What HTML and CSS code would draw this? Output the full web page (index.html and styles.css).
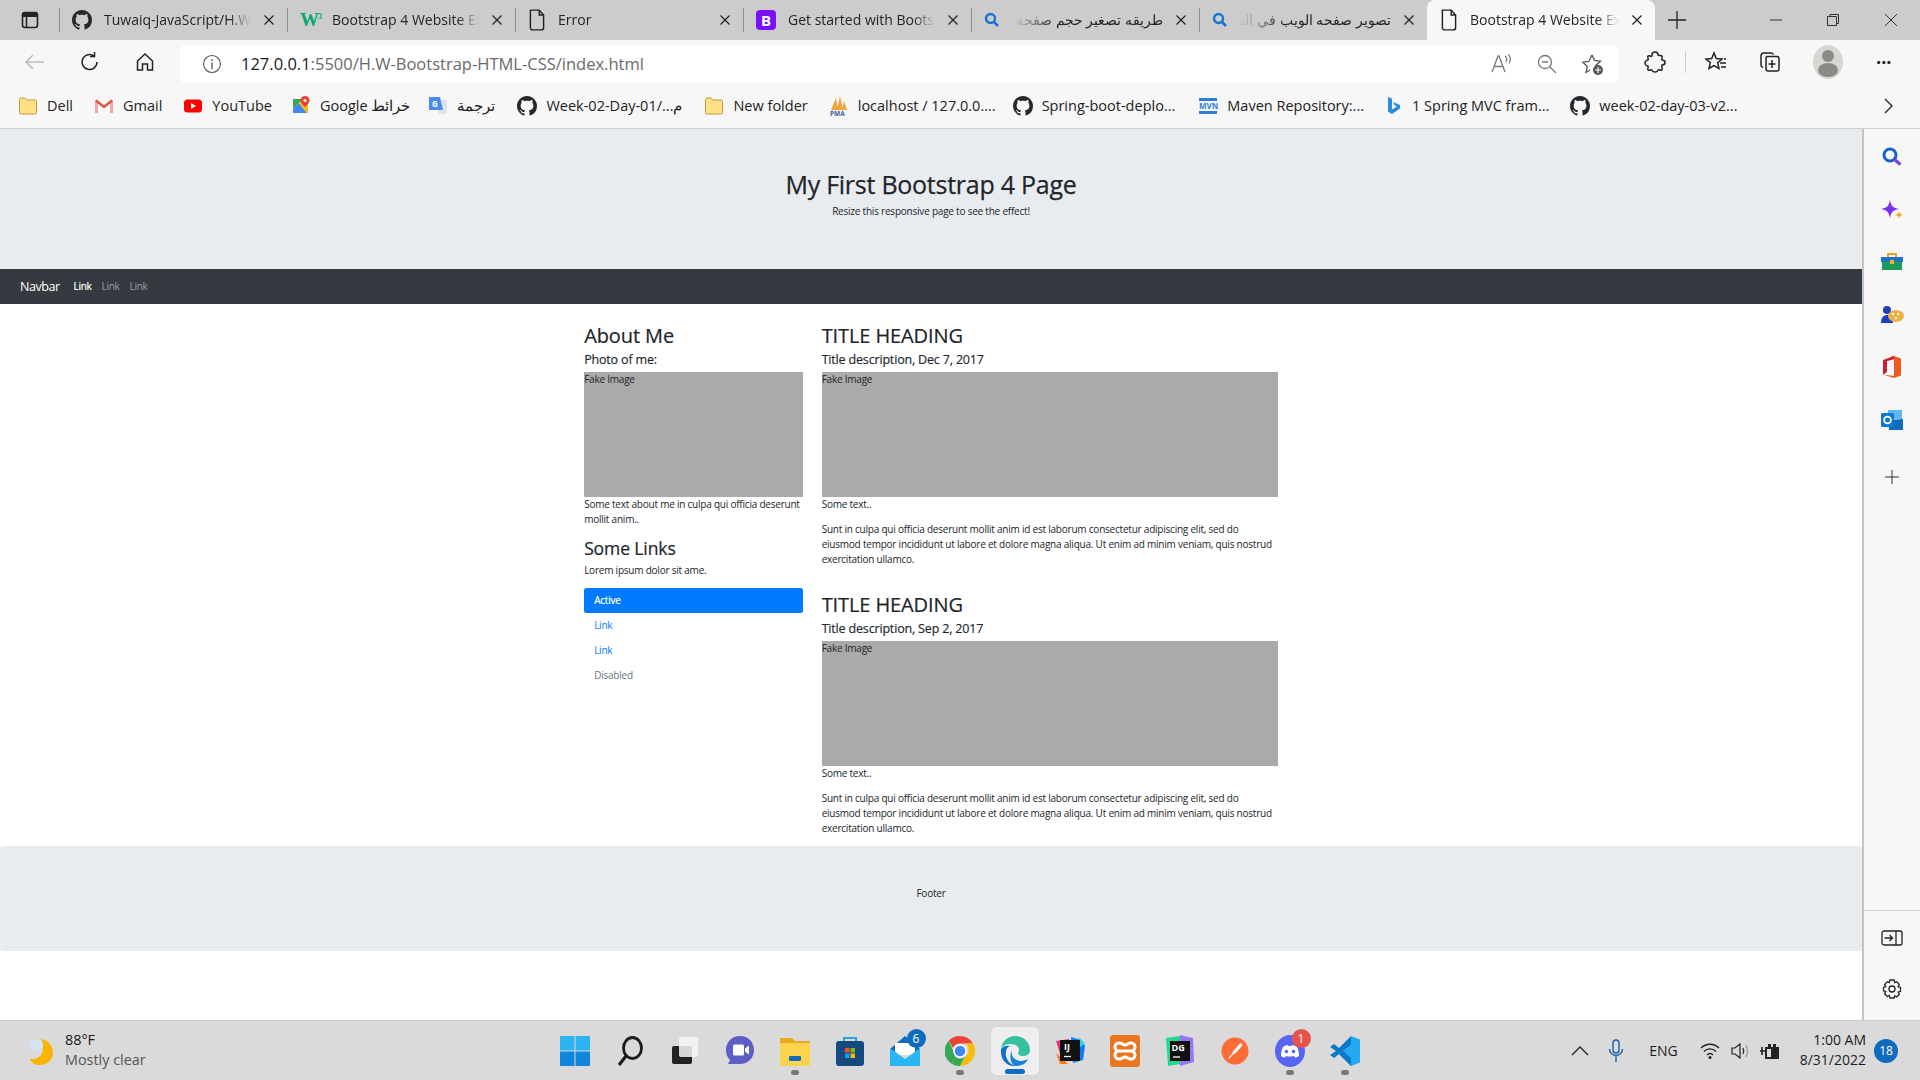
FILE: index.html
```html
<!DOCTYPE html>
<html lang="en">
<head>
    <meta charset="UTF-8">
    <meta name="viewport" content="width=device-width, initial-scale=1.0">
    <title>Bootstrap 4 Website Example</title>
    <link rel="stylesheet" href="styles.css">
</head>
<body>
    <svg class="defs" width="0" height="0">
        <symbol id="i-github" viewBox="0 0 16 16"><path fill="#24292e" d="M8 0C3.58 0 0 3.58 0 8c0 3.54 2.29 6.53 5.47 7.59.4.07.55-.17.55-.38 0-.19-.01-.82-.01-1.49-2.01.37-2.53-.49-2.69-.94-.09-.23-.48-.94-.82-1.13-.28-.15-.68-.52-.01-.53.63-.01 1.08.58 1.23.82.72 1.21 1.87.87 2.33.66.07-.52.28-.87.51-1.07-1.78-.2-3.64-.89-3.64-3.95 0-.87.31-1.59.82-2.15-.08-.2-.36-1.02.08-2.12 0 0 .67-.21 2.2.82.64-.18 1.32-.27 2-.27.68 0 1.36.09 2 .27 1.53-1.04 2.2-.82 2.2-.82.44 1.1.16 1.92.08 2.12.51.56.82 1.27.82 2.15 0 3.07-1.87 3.75-3.65 3.95.29.25.54.73.54 1.48 0 1.07-.01 1.93-.01 2.2 0 .21.15.46.55.38A8.013 8.013 0 0016 8c0-4.42-3.58-8-8-8z"/></symbol>
        <symbol id="i-page" viewBox="0 0 16 20"><path fill="none" stroke="#222" stroke-width="1.3" d="M2 1h8l4 4.500V17a2 2 0 0 1-2 2H4a2 2 0 0 1-2-2z M10 1v4.500h4"/></symbol>
        <symbol id="i-x" viewBox="0 0 12 12"><path stroke="#222" stroke-width="1.2" d="M1.500 1.500l9 9M10.500 1.500l-9 9"/></symbol>
        <symbol id="i-find" viewBox="0 0 16 16"><circle cx="6.500" cy="6.500" r="4.500" fill="none" stroke="#1a73d0" stroke-width="2.400"/><path stroke="#1a73d0" stroke-width="2.600" d="M10 10l4 4"/></symbol>
        <symbol id="i-folder" viewBox="0 0 20 20"><path fill="#ffe085" stroke="#c09a3c" d="M1.500 3.500a1.500 1.500 0 0 1 1.500-1.500h4l2 2h8a1.500 1.500 0 0 1 1.500 1.500v11a1.500 1.500 0 0 1-1.500 1.500H3a1.500 1.500 0 0 1-1.500-1.500z"/></symbol>
    </svg>

    <div class="window">
        <!-- tabs -->
        <div class="tabstrip">
            <div class="tab-menu">
                <svg width="20" height="20" viewBox="0 0 20 20"><rect x="2.500" y="2.500" width="15" height="15" rx="2.500" fill="none" stroke="#222" stroke-width="1.600"/><path fill="#222" d="M3 3h14v4H3z"/><path stroke="#222" stroke-width="1.600" d="M6.500 7v10"/></svg>
            </div>
            <div class="tab">
                <svg class="tab-icon" width="20" height="20"><use href="#i-github"/></svg>
                <span class="tab-title">Tuwaiq-JavaScript/H.W-Bootstrap</span>
                <svg class="tab-close" width="12" height="12"><use href="#i-x"/></svg>
            </div>
            <div class="tab">
                <span class="tab-icon w3-logo">W<sup>3</sup></span>
                <span class="tab-title">Bootstrap 4 Website Example</span>
                <svg class="tab-close" width="12" height="12"><use href="#i-x"/></svg>
            </div>
            <div class="tab">
                <svg class="tab-icon" width="18" height="22"><use href="#i-page"/></svg>
                <span class="tab-title">Error</span>
                <svg class="tab-close" width="12" height="12"><use href="#i-x"/></svg>
            </div>
            <div class="tab">
                <span class="tab-icon bs-logo">B</span>
                <span class="tab-title">Get started with Bootstrap</span>
                <svg class="tab-close" width="12" height="12"><use href="#i-x"/></svg>
            </div>
            <div class="tab">
                <svg class="tab-icon" width="16" height="16"><use href="#i-find"/></svg>
                <span class="tab-title tab-title-rtl" dir="rtl">طريقه تصغير حجم صفحة الويب</span>
                <svg class="tab-close" width="12" height="12"><use href="#i-x"/></svg>
            </div>
            <div class="tab">
                <svg class="tab-icon" width="16" height="16"><use href="#i-find"/></svg>
                <span class="tab-title tab-title-rtl" dir="rtl">تصوير صفحه الويب في المتصفح</span>
                <svg class="tab-close" width="12" height="12"><use href="#i-x"/></svg>
            </div>
            <div class="tab tab-active">
                <svg class="tab-icon" width="18" height="22"><use href="#i-page"/></svg>
                <span class="tab-title">Bootstrap 4 Website Example</span>
                <svg class="tab-close" width="12" height="12"><use href="#i-x"/></svg>
            </div>
            <svg class="tab-new" width="20" height="20" viewBox="0 0 20 20"><path stroke="#222" stroke-width="1.300" d="M10 1v18M1 10h18"/></svg>
            <div class="win-controls">
                <svg width="12" height="12" viewBox="0 0 12 12"><path stroke="#333" d="M0 6h12"/></svg>
                <svg width="14" height="14" viewBox="0 0 14 14"><path fill="none" stroke="#333" d="M1.500 3.500h9v9h-9zM4 3.500V1.500h8.500v9h-2"/></svg>
                <svg width="14" height="14" viewBox="0 0 14 14"><path stroke="#333" d="M1 1l12 12M13 1L1 13"/></svg>
            </div>
        </div>

        <!-- address bar -->
        <div class="toolbar">
            <svg class="tool tool-back" width="24" height="24" viewBox="0 0 24 24"><path fill="none" stroke="#bbb" stroke-width="1.500" d="M21 12H3M10 5l-7 7 7 7"/></svg>
            <svg class="tool" width="24" height="24" viewBox="0 0 24 24"><path fill="none" stroke="#222" stroke-width="1.500" d="M19 12a7.500 7.500 0 1 1-3-6M16.500 2v4.500H12"/></svg>
            <svg class="tool" width="24" height="24" viewBox="0 0 24 24"><path fill="none" stroke="#222" stroke-width="1.500" d="M4.500 11L12 4l7.500 7v9h-5v-6h-5v6h-5z"/></svg>
            <div class="address">
                <svg width="20" height="20" viewBox="0 0 20 20"><circle cx="10" cy="10" r="8.500" fill="none" stroke="#555" stroke-width="1.100"/><path stroke="#555" stroke-width="1.300" d="M10 8.500V15M10 5v2"/></svg>
                <span class="url"><b>127.0.0.1</b>:5500/H.W-Bootstrap-HTML-CSS/index.html</span>
                <div class="address-tools">
                    <svg width="24" height="24" viewBox="0 0 24 24"><path fill="none" stroke="#777" stroke-width="1.300" d="M3 20L9 4h1l6 16M5.500 14.500h8M16 4c2 1 2 4 1 6M19 2.500c3 2 3 6 1 9"/></svg>
                    <svg width="22" height="22" viewBox="0 0 22 22"><circle cx="9" cy="9" r="6.500" fill="none" stroke="#777" stroke-width="1.300"/><path stroke="#777" stroke-width="1.300" d="M14 14l6 6M6 9h6"/></svg>
                    <svg width="24" height="24" viewBox="0 0 24 24"><path fill="none" stroke="#555" stroke-width="1.300" d="M11 3l2.500 5.500 6 .7-4.500 4 .5 2.500M9 18l-4 2.500 1.300-6-4.500-4.300 6-.7L11 3"/><circle cx="17" cy="18" r="5" fill="#555"/><path stroke="#fff" stroke-width="1.200" d="M17 15v6M14 18h6"/></svg>
                </div>
            </div>
            <div class="tool-right">
                <svg class="t-ext" width="24" height="24" viewBox="0 0 24 24"><path fill="none" stroke="#222" stroke-width="1.500" d="M9 5a3 3 0 0 1 6 0c0 1 3 0 4 1s-1 3 0 4c2 0 3 1 3 2.500s-1 2.500-3 2.500c-1 1 1 4 0 5s-3-1-4 0c0 1-1.500 2-3 2s-3-1-3-2c-1-1-3 1-4 0s1-3 0-4c-1 0-3-1-3-3s2-3 3-3c1-1-1-3 0-4s3 1 4 0z"/></svg>
                <span class="tool-sep"></span>
                <svg class="t-fav" width="24" height="24" viewBox="0 0 24 24"><path fill="none" stroke="#222" stroke-width="1.500" d="M10 3l2.300 5.500 5.700.5-4.300 3.800 1.300 5.700-5-3-5 3 1.300-5.700L2 9l5.700-.5zM16 13h6M17 17h5M20 9h2"/></svg>
                <svg class="t-col" width="24" height="24" viewBox="0 0 24 24"><path fill="none" stroke="#222" stroke-width="1.500" d="M9 6.500h10a2 2 0 0 1 2 2V19a2 2 0 0 1-2 2H10a2 2 0 0 1-2-2V8.500a2 2 0 0 1 1-2zM14 10v8M10.500 14h7M5 17.500c-1-.3-2-1.200-2-2.500V6a3 3 0 0 1 3-3h7c1 0 2 .6 2.500 1.500"/></svg>
                <div class="avatar">
                    <svg width="30" height="32" viewBox="0 0 30 32"><circle cx="15" cy="11" r="6" fill="#8a8a86"/><ellipse cx="15" cy="25" rx="10" ry="7" fill="#8a8a86"/></svg>
                </div>
                <span class="t-more">···</span>
            </div>
        </div>

        <!-- favorites -->
        <div class="bookmarks">
            <div class="bm b-dell"><svg width="20" height="20"><use href="#i-folder"/></svg><span>Dell</span></div>
            <div class="bm b-gmail">
                <svg width="20" height="20" viewBox="0 0 20 20"><path fill="#f0a9a3" d="M1 4h3v13H1zM16 4h3v13h-3z"/><path fill="none" stroke="#d9534a" stroke-width="2.400" d="M2 4.500l8 6.500 8-6.500"/></svg>
                <span>Gmail</span>
            </div>
            <div class="bm b-yt">
                <svg width="20" height="20" viewBox="0 0 20 20"><rect x="1" y="3.500" width="18" height="13" rx="3.500" fill="#f00"/><path fill="#fff" d="M8 7l5 3-5 3z"/></svg>
                <span>YouTube</span>
            </div>
            <div class="bm b-maps">
                <svg width="20" height="20" viewBox="0 0 20 20"><path fill="#34a853" d="M2 3h10l-10 10z"/><path fill="#4285f4" d="M2 13l6-6 8 10H2z"/><path fill="#fbbc04" d="M8 7l3-3 6 6v7h-1z"/><path fill="#ea4335" d="M14 0a4.500 4.500 0 0 1 4.500 4.500C18.500 7.500 14 11 14 11S9.500 7.500 9.500 4.500A4.500 4.500 0 0 1 14 0z"/><circle cx="14" cy="4.500" r="1.500" fill="#fff"/></svg>
                <span>Google خرائط</span>
            </div>
            <div class="bm b-trans">
                <svg width="20" height="20" viewBox="0 0 20 20"><path fill="#dfe3e8" d="M8 4h11v14H11z"/><path fill="#4a8af4" d="M1 1h11l3 13H1z"/><text x="4" y="11" class="g-letter">G</text></svg>
                <span dir="rtl">ترجمة</span>
            </div>
            <div class="bm b-week"><svg width="20" height="20"><use href="#i-github"/></svg><span>Week-02-Day-01/...م</span></div>
            <div class="bm b-new"><svg width="20" height="20"><use href="#i-folder"/></svg><span>New folder</span></div>
            <div class="bm b-pma">
                <svg width="20" height="22" viewBox="0 0 20 22"><path fill="#f2a33a" d="M2 15L7 3l2 12zM8 15l3-14 3 14zM13 15l2-9 3 9z"/><text x="1" y="21" class="pma-text">PMA</text></svg>
                <span>localhost / 127.0.0....</span>
            </div>
            <div class="bm b-spring"><svg width="20" height="20"><use href="#i-github"/></svg><span>Spring-boot-deplo...</span></div>
            <div class="bm b-mvn">
                <svg width="20" height="20" viewBox="0 0 20 20"><path fill="#2f7fd6" d="M1 2h18v3H1zM1 15h18v3H1z"/><text x="1" y="13" class="mvn-text">MVN</text></svg>
                <span>Maven Repository:...</span>
            </div>
            <div class="bm b-mvc">
                <svg width="20" height="20" viewBox="0 0 20 20"><path fill="#2a8be0" d="M5 1l4 1.500v11l5-3-2.500-1.200L10 6l7 3v3.500L9 18l-4-2.500z"/></svg>
                <span>1 Spring MVC fram...</span>
            </div>
            <div class="bm b-week2"><svg width="20" height="20"><use href="#i-github"/></svg><span>week-02-day-03-v2...</span></div>
            <svg class="bm-more" width="12" height="16" viewBox="0 0 12 16"><path fill="none" stroke="#222" stroke-width="1.300" d="M3 1l7 7-7 7"/></svg>
        </div>

        <div class="browser-body">
            <!-- the bootstrap page itself -->
            <div class="page">
                <div class="jumbotron">
                    <h1>My First Bootstrap 4 Page</h1>
                    <p>Resize this responsive page to see the effect!</p>
                </div>
                <nav class="navbar">
                    <a class="navbar-brand">Navbar</a>
                    <a class="nav-item nav-on">Link</a>
                    <a class="nav-item">Link</a>
                    <a class="nav-item">Link</a>
                </nav>
                <div class="content">
                    <div class="col-side">
                        <h2>About Me</h2>
                        <h5>Photo of me:</h5>
                        <div class="fake-img">Fake Image</div>
                        <p>Some text about me in culpa qui officia deserunt mollit anim..</p>
                        <h3>Some Links</h3>
                        <p>Lorem ipsum dolor sit ame.</p>
                        <ul class="pills">
                            <li class="pill pill-active">Active</li>
                            <li class="pill">Link</li>
                            <li class="pill">Link</li>
                            <li class="pill pill-off">Disabled</li>
                        </ul>
                    </div>
                    <div class="col-main">
                        <h2>TITLE HEADING</h2>
                        <h5>Title description, Dec 7, 2017</h5>
                        <div class="fake-img">Fake Image</div>
                        <p>Some text..</p>
                        <p>Sunt in culpa qui officia deserunt mollit anim id est laborum consectetur adipiscing elit, sed do eiusmod tempor incididunt ut labore et dolore magna aliqua. Ut enim ad minim veniam, quis nostrud exercitation ullamco.</p>
                        <br>
                        <h2>TITLE HEADING</h2>
                        <h5>Title description, Sep 2, 2017</h5>
                        <div class="fake-img">Fake Image</div>
                        <p>Some text..</p>
                        <p>Sunt in culpa qui officia deserunt mollit anim id est laborum consectetur adipiscing elit, sed do eiusmod tempor incididunt ut labore et dolore magna aliqua. Ut enim ad minim veniam, quis nostrud exercitation ullamco.</p>
                    </div>
                </div>
                <div class="footer"><p>Footer</p></div>
            </div>

            <!-- edge sidebar -->
            <div class="sidebar">
                <div class="side-top">
                    <svg width="22" height="22" viewBox="0 0 22 22"><circle cx="9" cy="9" r="6" fill="none" stroke="#1b5fc9" stroke-width="3"/><path stroke="#7a3fe0" stroke-width="3.200" d="M13.500 13.500l6 5"/></svg>
                    <svg width="24" height="24" viewBox="0 0 24 24"><path fill="#7a2ff0" d="M10 2c1 6 3 8 9 9-6 1-8 3-9 9-1-6-3-8-9-9 6-1 8-3 9-9z"/><path fill="#f5a623" d="M19 13c.4 2.400 1.200 3.200 4 4-2.800.6-3.600 1.400-4 4-.4-2.600-1.200-3.400-4-4 2.800-.8 3.600-1.600 4-4z"/></svg>
                    <svg width="24" height="20" viewBox="0 0 24 20"><path fill="none" stroke="#f0a020" stroke-width="2" d="M8 5V2h8v3"/><path fill="#1f72c4" d="M1 5h22v5H1z"/><path fill="#1c9a5c" d="M2 10h20v8H2z"/><path fill="#f5b52c" d="M10 8h4v4h-4z"/></svg>
                    <svg width="24" height="22" viewBox="0 0 24 22"><circle cx="7" cy="6" r="4" fill="#1b3fc0"/><path fill="#1b3fc0" d="M1 19c0-6 3-8 6-8s6 2 6 8z"/><ellipse cx="16" cy="12" rx="8" ry="6" fill="#f0b040"/><g fill="#fff"><circle cx="13" cy="10" r="1.200"/><circle cx="18" cy="10" r="1.200"/><circle cx="16" cy="14" r="1.200"/></g></svg>
                    <svg width="22" height="24" viewBox="0 0 22 24"><path fill="#eb5a1e" d="M13 1l7 2.500v17L13 23 2 19.500 13 21V4L6 6v11l-4 2.500V5z"/><path fill="#c8202f" d="M2 5.500L13 1v3L6 6v11l-4 2.500z"/></svg>
                    <svg width="24" height="22" viewBox="0 0 24 22"><path fill="#5fb6ee" d="M8 1h14v9H8z"/><path fill="#0a6cbd" d="M9 11l14-1v11H9z"/><rect x="1" y="4" width="13" height="14" rx="1.500" fill="#0f78d4"/><circle cx="7.500" cy="11" r="3.400" fill="none" stroke="#fff" stroke-width="1.800"/></svg>
                    <svg class="side-add" width="14" height="14" viewBox="0 0 14 14"><path stroke="#333" d="M7 0v14M0 7h14"/></svg>
                </div>
                <div class="side-bottom">
                    <svg width="22" height="18" viewBox="0 0 22 18"><rect x="1" y="2" width="20" height="14" rx="2" fill="none" stroke="#222" stroke-width="1.300"/><path stroke="#222" stroke-width="1.300" fill="none" d="M15 2v14M3.500 9h8M8.500 6l3 3-3 3"/></svg>
                    <svg width="22" height="22" viewBox="0 0 22 22"><circle cx="11" cy="11" r="3" fill="none" stroke="#222" stroke-width="1.300"/><path fill="none" stroke="#222" stroke-width="1.300" d="M9 2h4l.7 2.600 2-.9 2.600 2.800-1.200 2.100 2.400.9v3.800l-2.400.8 1.200 2.200-2.700 2.700-2-1L13 20h-4l-.7-2.500-2 1-2.700-2.700 1.200-2.200-2.300-.8V9.500l2.300-.9-1.200-2.100 2.700-2.800 2 .9z"/></svg>
                </div>
            </div>
        </div>

        <!-- windows taskbar -->
        <div class="taskbar">
            <div class="weather">
                <svg width="28" height="32" viewBox="0 0 28 32"><path fill="#f7b500" d="M14 4c7 1 12 7 12 14s-6 12-13 12c-5 0-9-2-10-6 7 1 12-3 13-9 .5-4 0-8-2-11z"/><ellipse cx="9" cy="10" rx="7" ry="5.500" fill="#d5e3f3"/></svg>
                <div class="weather-text"><div>88°F</div><div class="weather-sub">Mostly clear</div></div>
            </div>
            <div class="task-apps">
                <div class="app">
                    <svg width="30" height="30" viewBox="0 0 30 30"><path fill="#2fb4f2" d="M0 1a1 1 0 0 1 1-1h13.500v14.500H0z"/><path fill="#2fb4f2" d="M15.500 0H29a1 1 0 0 1 1 1v13.500H15.500z"/><path fill="#0f86dc" d="M0 15.500h14.500V30H1a1 1 0 0 1-1-1zM15.500 15.500H30V29a1 1 0 0 1-1 1H15.500z"/></svg>
                </div>
                <div class="app">
                    <svg width="30" height="30" viewBox="0 0 30 30"><ellipse cx="17.500" cy="12" rx="9" ry="10.500" fill="none" stroke="#1c1c1c" stroke-width="2.800"/><path stroke="#1c1c1c" stroke-width="3.200" d="M11 20l-7 9"/></svg>
                </div>
                <div class="app">
                    <svg width="30" height="30" viewBox="0 0 30 30"><rect x="2" y="10" width="20" height="18" rx="2" fill="#222"/><rect x="9" y="1" width="19" height="20" rx="2" fill="#f6f6f6" opacity=".85"/></svg>
                </div>
                <div class="app">
                    <svg width="30" height="32" viewBox="0 0 30 32"><path fill="#5b5fc7" d="M15 1c8 0 14 6 14 14s-6 14-14 14H3l2-4c-3-3-4-6-4-10C1 7 7 1 15 1z"/><path fill="#fff" d="M8 11a1.500 1.500 0 0 1 1.500-1.500h8A1.500 1.500 0 0 1 19 11v8a1.500 1.500 0 0 1-1.500 1.500h-8A1.500 1.500 0 0 1 8 19zM20 13.500l4-3v9l-4-3z"/></svg>
                </div>
                <div class="app run">
                    <svg width="30" height="30" viewBox="0 0 30 30"><path fill="#e8a91f" d="M0 2h12l3 3h15v6H0z"/><path fill="#fcd34d" d="M0 7h30v23H0z"/><rect x="9" y="20" width="12" height="5" rx="1" fill="#1668b8"/></svg>
                </div>
                <div class="app">
                    <svg width="30" height="32" viewBox="0 0 30 32"><path fill="none" stroke="#29a3e0" stroke-width="2" d="M9 8V3h12v5"/><rect x="1" y="6" width="28" height="25" rx="3" fill="#154a80"/><path fill="#f25022" d="M10 13h4.500v4.500H10z"/><path fill="#7fba00" d="M15.500 13H20v4.500h-4.500z"/><path fill="#00a4ef" d="M10 18.500h4.500V23H10z"/><path fill="#ffb900" d="M15.500 18.500H20V23h-4.500z"/></svg>
                </div>
                <div class="app">
                    <svg width="30" height="30" viewBox="0 0 30 30"><path fill="#0f6cbd" d="M0 13L15 0l15 13v4H0z"/><path fill="#fff" d="M5 7h20v12H5z"/><path fill="#29b6f2" d="M0 12l15 11 15-11v18H0z"/></svg>
                    <span class="app-badge badge-blue">6</span>
                </div>
                <div class="app run">
                    <svg width="30" height="30" viewBox="0 0 30 30"><path fill="#ea4335" d="M15 0a15 15 0 0 1 13 7.500H15a7.500 7.500 0 0 0-7 4.500L4 4.500A15 15 0 0 1 15 0z"/><path fill="#34a853" d="M4 4.500L10.500 21 7 28A15 15 0 0 1 4 4.500z"/><path fill="#34a853" d="M7 28l3.500-7a7.500 7.500 0 0 0 9.500-.5L15 30A15 15 0 0 1 7 28z"/><path fill="#fbbc04" d="M28 7.500A15 15 0 0 1 15 30l6.500-11a7.500 7.500 0 0 0-1-11.500z"/><circle cx="15" cy="15" r="6" fill="#4285f4" stroke="#fff" stroke-width="1.500"/></svg>
                </div>
                <div class="app app-edge">
                    <svg width="30" height="30" viewBox="0 0 30 30"><path fill="#35c1a0" d="M1 13C2 5 8 0 15 0c8 0 15 6 15 14 0 4-3 6-7 6-3 0-5-1-5-3 0-1 1-1.500 1-3 0-4-4-6-8-6-5 0-9 2-10 5z"/><path fill="#0f6fc6" d="M1 13c2-3 6-4 9-3-3 1-5 5-4 10 1 5 5 9 10 10-9 1-16-6-15-17z"/><path fill="#1683d8" d="M16 30c5 0 10-2 12-7-3 2-9 3-13 0-3-2-4-6-3-9-3 5-2 15 4 16z"/></svg>
                    <span class="edge-bar"></span>
                </div>
                <div class="app">
                    <svg width="30" height="32" viewBox="0 0 30 32"><path fill="#f2367e" d="M1 6l13-2 4 14-10 11z"/><path fill="#fe7b18" d="M1 18l12 11-8 0z"/><path fill="#087cfa" d="M16 2l10 3 4 6-2 14-10 3z"/><path fill="#2ad4f0" d="M24 2l6 7-5 3z"/><rect x="5" y="5" width="20" height="21" rx="1" fill="#111"/><text x="9" y="15" class="ide-text">IJ</text><path stroke="#fff" stroke-width="1.300" d="M9 21.500h7"/></svg>
                </div>
                <div class="app">
                    <svg width="30" height="32" viewBox="0 0 30 32"><rect x="0" y="0" width="30" height="32" rx="3" fill="#e87722"/><path fill="none" stroke="#fff" stroke-width="3" d="M9 8a4 4 0 0 0 0 8 4 4 0 0 0 0 8c3 0 4-2 6-2s3 2 6 2a4 4 0 0 0 0-8 4 4 0 0 0 0-8c-3 0-4 2-6 2s-3-2-6-2zM9 16h12"/></svg>
                </div>
                <div class="app">
                    <svg width="30" height="32" viewBox="0 0 30 32"><path fill="#22d88f" d="M1 3l14-2v28L3 31z"/><path fill="#9775f8" d="M15 0l13 3 1 24-14 4z"/><rect x="5" y="6" width="20" height="20" fill="#111"/><text x="6.500" y="16" class="ide-text">DG</text><path stroke="#fff" stroke-width="1.300" d="M8 22h7"/></svg>
                </div>
                <div class="app">
                    <svg width="28" height="28" viewBox="0 0 28 28"><circle cx="14" cy="14" r="13.500" fill="#ff6c37"/><path fill="#fff" d="M20 6c1.500 1 1.500 2.500.5 3.500l-6.500 7-2 1-4 4.500-.8-.8 4-4.700.8-2 6-7c.5-.6 1.300-1.100 2-1.500z"/></svg>
                </div>
                <div class="app run">
                    <svg width="30" height="32" viewBox="0 0 30 32"><ellipse cx="15" cy="16" rx="15" ry="16" fill="#5865f2"/><path fill="#fff" d="M8 12c2-1.500 4-2 5-2l.5 1h3l.5-1c1 0 3 .5 5 2 1.500 3 2 6 2 9-1.500 1-3 1.500-4 1.500l-1-1.500c-2.500.7-5.500.7-8 0l-1 1.500c-1 0-2.500-.5-4-1.500 0-3 .5-6 2-9z"/><circle cx="11.500" cy="16.500" r="1.800" fill="#5865f2"/><circle cx="18.500" cy="16.500" r="1.800" fill="#5865f2"/></svg>
                    <span class="app-badge badge-red">1</span>
                </div>
                <div class="app run">
                    <svg width="30" height="30" viewBox="0 0 30 30"><path fill="#23a9f2" d="M21 0l9 3.500v23L21 30 9 18l12-9z"/><path fill="#0a78c8" d="M21 0v9L9 18l-5 4-4-3 6-4-6-4 4-3 5 4z"/><path fill="#0a78c8" d="M9 18l12 12v-8l-8-7z"/></svg>
                </div>
            </div>
            <div class="tray">
                <svg class="tr-up" width="18" height="10" viewBox="0 0 18 10"><path fill="none" stroke="#222" stroke-width="1.300" d="M1 9l8-8 8 8"/></svg>
                <svg class="tr-mic" width="18" height="24" viewBox="0 0 18 24"><rect x="6" y="1" width="6" height="13" rx="3" fill="none" stroke="#1a5fb4" stroke-width="1.400"/><path fill="none" stroke="#1a5fb4" stroke-width="1.400" d="M2.500 10a6.500 6.500 0 0 0 13 0M9 17v6"/></svg>
                <span class="tr-lang">ENG</span>
                <svg class="tr-wifi" width="20" height="18" viewBox="0 0 20 18"><path fill="none" stroke="#222" stroke-width="1.300" d="M1 6c5-5 13-5 18 0M4 9.500c3.500-3.500 8.500-3.500 12 0M7 13c2-2 4-2 6 0"/><circle cx="10" cy="15.500" r="1.500" fill="#222"/></svg>
                <svg class="tr-vol" width="20" height="18" viewBox="0 0 20 18"><path fill="none" stroke="#222" stroke-width="1.200" d="M1 6h3l5-4v14l-5-4H1zM12 6c1 2 1 4 0 6"/><path fill="none" stroke="#999" stroke-width="1.200" d="M15 3c2 4 2 8 0 12"/></svg>
                <svg class="tr-bat" width="22" height="22" viewBox="0 0 22 22"><path fill="#222" d="M6 7h14v12H6zM9 4h3v3H9zM14 4h3v3h-3z"/><path stroke="#222" stroke-width="1.600" d="M1 11h5M3 7v8"/><path fill="#ddd" d="M8 9h4v8H8z"/></svg>
                <div class="clock"><div>1:00 AM</div><div>8/31/2022</div></div>
                <span class="notif">18</span>
            </div>
        </div>
    </div>
</body>
</html>
```

FILE: styles.css
```css
* { box-sizing: border-box; }
html, body { margin: 0; height: 100%; overflow: hidden; }
body { font-family: "Open Sans", "Noto Sans", sans-serif; color: #212529; background: #fff; }
.defs { position: absolute; }
svg { display: block; flex: none; }

.window { display: flex; flex-direction: column; height: 1080px; }

/* tabs */
.tabstrip { display: flex; align-items: flex-end; height: 40px; background: #ccc; flex: none; }
.tab-menu { width: 59px; height: 40px; display: flex; align-items: center; justify-content: center; }
.tab { position: relative; display: flex; align-items: center; gap: 12px; width: 228px; height: 40px; padding: 0 12px 0 13px; font-size: 14px; }
.tab:not(.tab-active)::after { content: ""; position: absolute; left: 0; top: 8px; bottom: 8px; width: 1px; background: #8f8f8f; }
.tab-active { background: #f7f7f7; border-radius: 8px 8px 0 0; }
.tab-active + .tab-new { margin-left: 12px; }
.tab-icon { flex: none; }
.tab-title { flex: 1; margin-bottom: 2px; white-space: nowrap; overflow: hidden; -webkit-mask-image: linear-gradient(to right, #000 85%, transparent); mask-image: linear-gradient(to right, #000 85%, transparent); }
.tab-title-rtl { text-align: right; -webkit-mask-image: linear-gradient(to left, #000 70%, transparent); mask-image: linear-gradient(to left, #000 70%, transparent); }
.tab-close { flex: none; }
.tab-new { margin-bottom: 10px; }
.w3-logo { width: 20px; color: #04aa6d; font-family: "Liberation Serif", serif; font-weight: bold; font-size: 19px; letter-spacing: -1px; }
.w3-logo sup { font-size: 8px; vertical-align: 7px; line-height: 0; }
.bs-logo { width: 20px; height: 20px; line-height: 20px; text-align: center; border-radius: 4px; background: #7a10f7; color: #fff; font-weight: bold; font-size: 15px; }
.win-controls { margin-left: auto; display: flex; align-items: center; gap: 44px; height: 40px; padding-right: 22px; }

/* toolbar */
.toolbar { display: flex; align-items: center; height: 44px; background: #f7f7f7; flex: none; padding-left: 23px; }
.tool { margin-right: 31px; }
.tool:nth-child(3) { margin-right: 23px; }
.address { display: flex; align-items: center; width: 1439px; height: 38px; margin-top: 4px; background: #fff; border-radius: 6px; padding: 0 14px 0 22px; }
.url { margin: 0 0 2px 19px; font-size: 16.500px; color: #6a6a6a; }
.url b { font-weight: normal; color: #1a1a1a; }
.address-tools { margin-left: auto; display: flex; align-items: center; gap: 23px; }
.tool-right { display: flex; align-items: center; margin-left: 24px; }
.tool-sep { width: 1px; height: 22px; background: #ccc; margin: 0 18px; }
.t-col { margin-left: 30px; }
.avatar { width: 30px; height: 34px; margin-left: 31px; border-radius: 50%; background: #d6d6d2; overflow: hidden; }
.t-more { margin-left: 33px; font-size: 18px; font-weight: bold; color: #222; }

/* favorites */
.bookmarks { display: flex; align-items: center; height: 45px; background: #f7f7f7; border-bottom: 1px solid #d0d0d0; flex: none; padding-left: 18px; color: #222; }
.bm { display: flex; align-items: center; gap: 9px; white-space: nowrap; }
.bm span { margin-bottom: 2px; font-size: 14.500px; }
.b-gmail { margin-left: 21px; }
.b-yt { margin-left: 21px; }
.b-maps { margin-left: 19px; }
.b-trans { margin-left: 18px; }
.b-week { margin-left: 22px; }
.b-new { margin-left: 22px; }
.b-pma { margin-left: 21px; }
.b-spring { margin-left: 17px; }
.b-mvn { margin-left: 23px; }
.b-mvc { margin-left: 19px; }
.b-week2 { margin-left: 21px; }
.bm-more { margin-left: auto; margin-right: 26px; }
.g-letter { font-size: 8px; font-weight: bold; fill: #fff; }
.pma-text { font-size: 6.500px; font-weight: bold; fill: #3a5a98; }
.mvn-text { font-size: 8px; font-weight: bold; fill: #2f7fd6; }
.ide-text { font-size: 9px; font-weight: bold; fill: #fff; }

/* browser area */
.browser-body { display: flex; height: 891px; flex: none; }
.page { flex: 1; min-width: 0; background: #fff; font-size: 10px; line-height: 15px; letter-spacing: -0.22px; }
.page p { margin: 0 0 10px; }
.jumbotron { background: #e9ecef; padding: 40px 20px; text-align: center; }
.jumbotron h1 { margin: 0 0 5px; font-size: 25px; line-height: 30px; font-weight: 500; letter-spacing: -0.25px; -webkit-text-stroke: 0.25px; }
.navbar { display: flex; align-items: center; height: 35px; background: #343a40; padding: 0 20px; }
.navbar-brand { font-size: 12.500px; color: #fff; margin-right: 9px; letter-spacing: -0.45px; }
.nav-item { padding: 0 5px; color: rgba(255, 255, 255, .5); letter-spacing: -0.3px; }
.nav-on { color: #fff; -webkit-text-stroke: 0.2px; }
.content { display: grid; grid-template-columns: 237.500px 475px; width: 712.500px; margin: 0 auto; padding-top: 19px; }
.col-side, .col-main { padding: 0 9.375px; }
.page h2 { margin: 0 0 3px; font-size: 20px; line-height: 26px; font-weight: 500; letter-spacing: -0.1px; -webkit-text-stroke: 0.2px; }
.page h3 { margin: 0 0 3px; font-size: 17.500px; line-height: 23px; font-weight: 500; letter-spacing: -0.1px; -webkit-text-stroke: 0.2px; }
.page h5 { margin: 0 0 5px; font-size: 12.500px; line-height: 15px; font-weight: 500; letter-spacing: -0.17px; -webkit-text-stroke: 0.15px; }
.fake-img { height: 125px; background: #aaa; }
.pills { list-style: none; margin: 0; padding: 0; }
.pill { padding: 5px 10px; color: #007bff; border-radius: 2.500px; }
.pill-active { background: #007bff; color: #fff; -webkit-text-stroke: 0.2px; }
.pill-off { color: #6c757d; }
.footer { background: #e9ecef; padding: 40px 20px; text-align: center; border-radius: 3px; }

/* sidebar */
.sidebar { display: flex; flex-direction: column; justify-content: space-between; width: 58px; background: #f7f7f7; border-left: 2px solid #c4c4c4; }
.side-top { display: grid; grid-auto-rows: 52.500px; justify-items: center; align-items: center; padding-top: 2px; }
.side-add { margin-top: 10px; }
.side-bottom { display: flex; flex-direction: column; align-items: center; gap: 31px; height: 110px; padding-top: 18px; border-top: 1px solid #cfcfcf; }

/* taskbar */
.taskbar { display: grid; grid-template-columns: 1fr 825px 1fr; align-items: center; height: 60px; background: #dadada; border-top: 1px solid #cdcdcd; flex: none; }
.weather { display: flex; align-items: center; gap: 10px; padding-left: 27px; font-size: 14.400px; line-height: 20px; color: #1c1c1c; }
.weather-text { margin-bottom: 2px; }
.weather-sub { color: #555; }
.task-apps { display: flex; justify-content: center; }
.app { position: relative; display: flex; align-items: center; justify-content: center; width: 55px; height: 48px; }
.run::after { content: ""; position: absolute; left: 50%; bottom: 0; width: 8px; height: 5px; margin-left: -4px; border-radius: 3px; background: #777; }
.app-edge { background: #eeeeee; border-radius: 5px; width: 48px; margin: 0 3.500px; box-shadow: 0 0 1px #bbb; }
.edge-bar { position: absolute; left: 14px; bottom: 1px; width: 20px; height: 5px; border-radius: 3px; background: #0a6fc6; }
.app-badge { position: absolute; top: 2px; right: 7px; width: 19px; height: 19px; border-radius: 50%; color: #fff; font-size: 12px; line-height: 19px; text-align: center; }
.badge-blue { background: #0f6cbd; }
.badge-red { background: #e5534b; }
.tray { display: flex; align-items: center; justify-content: flex-end; padding-right: 22px; font-size: 14px; color: #1c1c1c; }
.tr-mic { margin-left: 18px; }
.tr-lang { margin-left: 24px; }
.tr-wifi { margin-left: 22px; }
.tr-vol { margin-left: 11px; }
.tr-bat { margin-left: 8px; }
.clock { margin: 0 0 2px 19px; text-align: right; line-height: 20px; }
.notif { width: 24px; height: 24px; margin-left: 8px; border-radius: 50%; background: #0f6cbd; color: #fff; font-size: 12px; line-height: 24px; text-align: center; }
```
